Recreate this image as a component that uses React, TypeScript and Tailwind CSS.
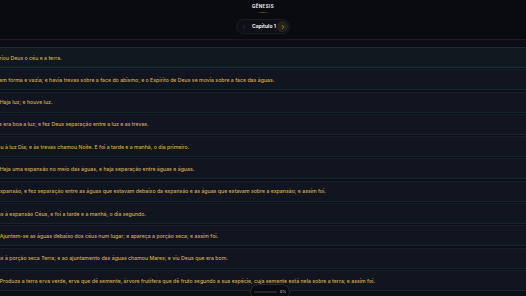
import { ChevronLeft, ChevronRight } from 'lucide-react';

const VERSES = [
  'No princípio criou Deus o céu e a terra.',
  'E a terra era sem forma e vazia; e havia trevas sobre a face do abismo; e o Espírito de Deus se movia sobre a face das águas.',
  'E disse Deus: Haja luz; e houve luz.',
  'E viu Deus que era boa a luz; e fez Deus separação entre a luz e as trevas.',
  'E Deus chamou à luz Dia; e às trevas chamou Noite. E foi a tarde e a manhã, o dia primeiro.',
  'E disse Deus: Haja uma expansão no meio das águas, e haja separação entre águas e águas.',
  'E fez Deus a expansão, e fez separação entre as águas que estavam debaixo da expansão e as águas que estavam sobre a expansão; e assim foi.',
  'E chamou Deus à expansão Céus, e foi a tarde e a manhã, o dia segundo.',
  'E disse Deus: Ajuntem-se as águas debaixo dos céus num lugar; e apareça a porção seca; e assim foi.',
  'E chamou Deus à porção seca Terra; e ao ajuntamento das águas chamou Mares; e viu Deus que era bom.',
  'E disse Deus: Produza a terra erva verde, erva que dê semente, árvore frutífera que dê fruto segundo a sua espécie, cuja semente está nela sobre a terra; e assim foi.',
];

export default function App() {
  return (
    <div
      className="relative w-[526px] h-[296px] overflow-hidden bg-[#0d0d15] text-white"
      style={{ fontFamily: 'Inter, "Noto Sans", sans-serif' }}
    >
      {/* header */}
      <header className="h-[40px] bg-[#0a0b10] border-b border-[#1a1a24] flex flex-col items-center pt-[4px]">
        <div className="flex flex-col items-center">
          <h1 className="text-[4.5px] font-bold tracking-[0.4px] text-[#e8e8ee] leading-[6px]">GÊNESIS</h1>
          <span className="mt-[2px] w-[12px] h-[1px] bg-gradient-to-r from-transparent via-[#5a4a2a] to-transparent" />
        </div>
        <div className="mt-[6px] h-[15px] w-[54px] rounded-full bg-[#0e1017] border border-[#1b1d26] flex items-center pl-[4px] pr-[1px]">
          <ChevronLeft className="w-[6px] h-[6px] text-[#3c3f4c]" strokeWidth={2.5} />
          <span className="ml-[5px] text-[5px] font-bold text-[#ececf2] whitespace-nowrap">Capítulo 1</span>
          <span className="ml-auto w-[11px] h-[11px] rounded-full bg-[#26231b] flex items-center justify-center">
            <ChevronRight className="w-[6px] h-[6px] text-[#d8ab4c]" strokeWidth={3} />
          </span>
        </div>
      </header>

      {/* verses */}
      <main className="pt-[7px] -ml-[39px] w-[900px] flex flex-col gap-[1.3px]">
        {VERSES.map((v, i) => (
          <div
            key={i}
            className={`h-[21px] flex items-center border-y px-[4px] pt-[2px] ${
              i === 0
                ? 'bg-[#0f191e] border-t-[#173036] border-b-[#173036]'
                : 'bg-[#11151f] border-t-[#171c28] border-b-[#14262c]'
            }`}
          >
            <p className="text-[5.2px] font-medium text-[#d8ab4e] whitespace-nowrap">{v}</p>
          </div>
        ))}
      </main>

      {/* progress */}
      <div className="absolute left-[250px] top-[284px] w-[40px] h-[16px] rounded-full bg-[#0b0c11] border border-[#25262f] flex items-start pt-[4px] px-[3px] gap-[3px]">
        <div className="mt-[2px] flex-1 h-[2px] rounded-full bg-[#23242d]" />
        <span className="text-[3.5px] font-bold text-[#9a9aa6] leading-[6px]">0%</span>
      </div>
    </div>
  );
}
